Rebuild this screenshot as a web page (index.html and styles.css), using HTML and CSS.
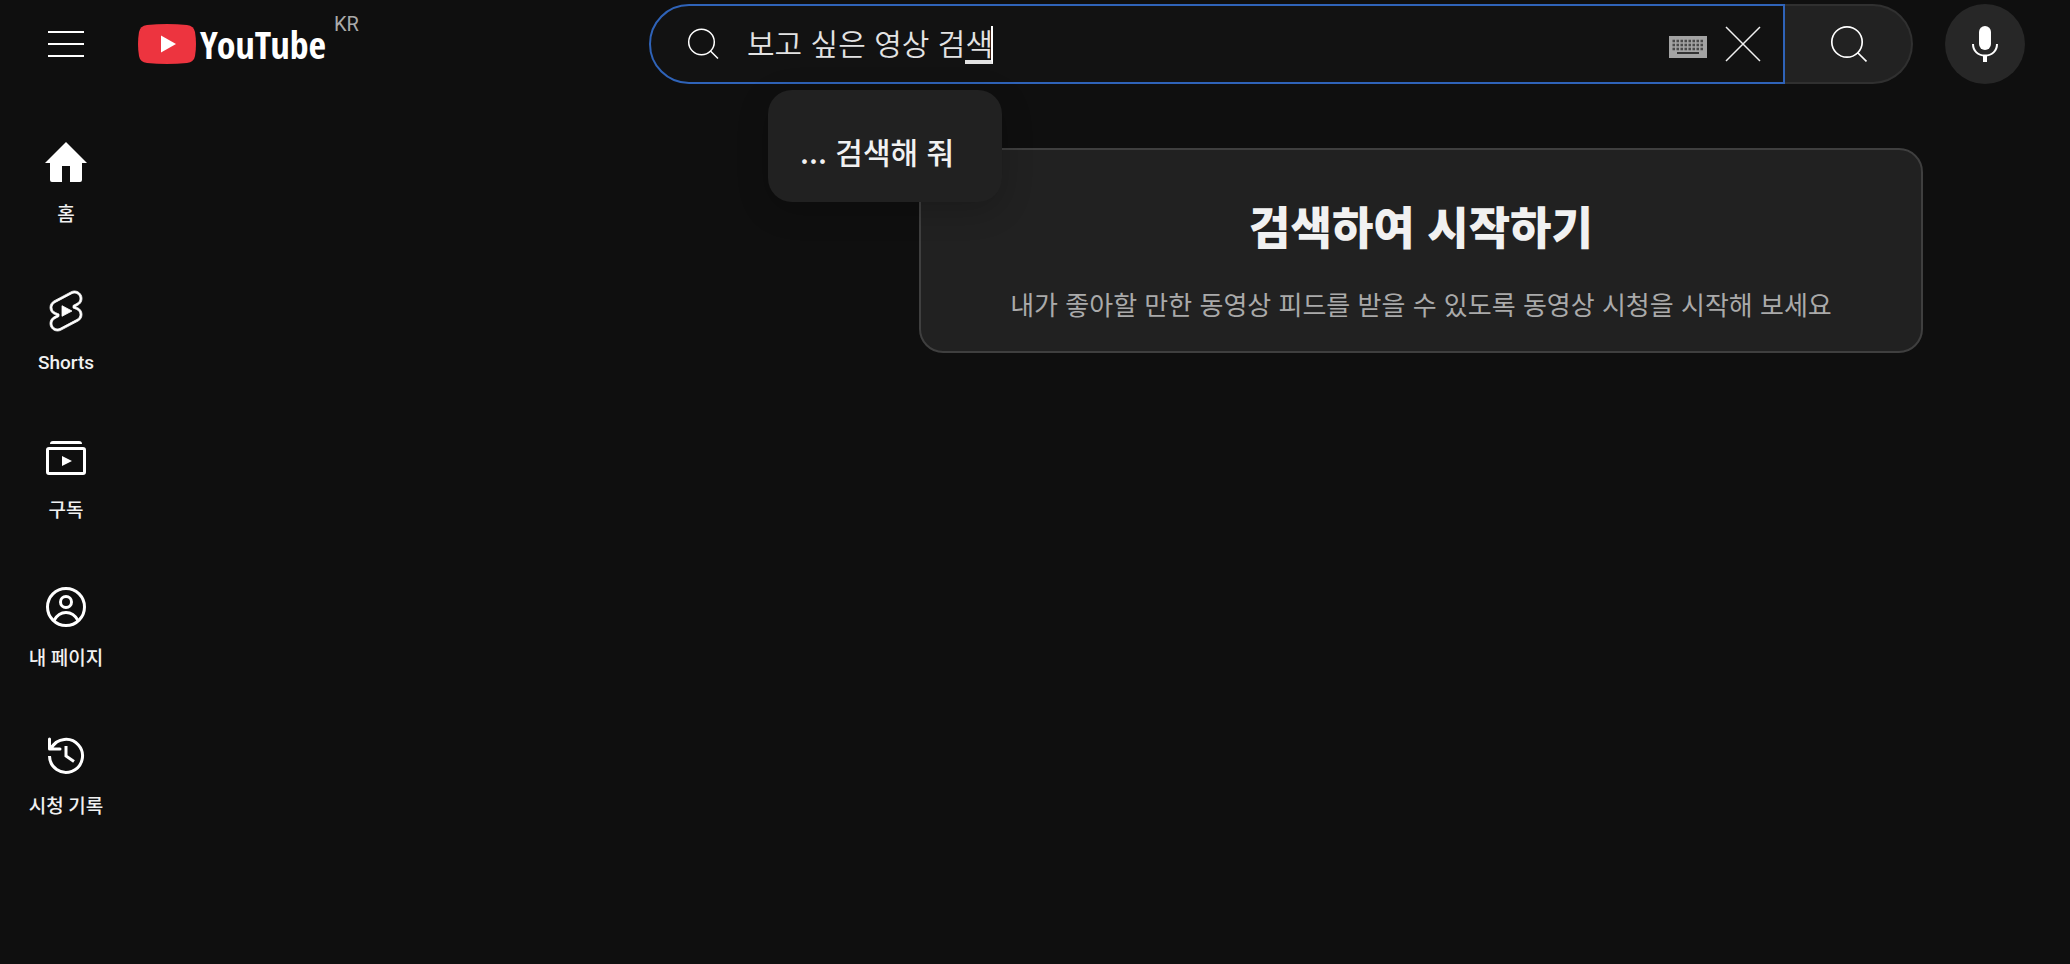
FILE: index.html
```html
<!DOCTYPE html>
<html lang="ko">
<head>
    <meta charset="utf-8">
    <title>YouTube</title>
    <link rel="stylesheet" href="styles.css">
</head>
<body>
    <header class="header">
        <div class="start">
            <button class="icon-button" type="button" aria-label="메뉴">
                <svg width="36" height="26" viewBox="0 0 36 26" fill="#fff">
                    <path d="M0 0h36v2H0zM0 12h36v2H0zM0 24h36v2H0z"/>
                </svg>
            </button>
            <a class="logo" href="/" aria-label="YouTube 홈">
                <svg width="58" height="40" viewBox="0 0 58 40">
                    <path fill="#ed343f" d="M9 1Q29-1 49 1Q56 2 57 8Q59 20 57 32Q56 38 49 39Q29 41 9 39Q2 38 1 32Q-1 20 1 8Q2 2 9 1z"/>
                    <path fill="#fff" d="M23 11.500v17L38 20z"/>
                </svg>
                <span class="wordmark">YouTube</span>
                <span class="country">KR</span>
            </a>
        </div>

        <form class="search" role="search">
            <div class="search-box">
                <svg width="32" height="32" viewBox="0 0 32 32" fill="none" stroke="#fff" stroke-width="1.500">
                    <circle cx="14.500" cy="14" r="12.800"/>
                    <path d="M23.500 23l7.500 7.500"/>
                </svg>
                <div class="field">
                    <input class="query" type="text" aria-label="검색" value="보고 싶은 영상 검색">
                    <span class="composing"></span>
                </div>
                <button class="icon-button keyboard" type="button" aria-label="키보드">
                    <svg width="38" height="22" viewBox="0 0 38 22">
                        <path fill="#a3a3a3" d="M0 0h38v22H0z"/>
                        <path stroke="#4a4a4a" stroke-width="2.500" stroke-dasharray="2.500 1.500" d="M3.500 5h31M3.500 9h31M3.500 13h31"/>
                        <path fill="#333" d="M8 16h22v2H8z"/>
                    </svg>
                </button>
                <button class="icon-button" type="button" aria-label="지우기">
                    <svg width="36" height="36" viewBox="0 0 36 36" stroke="#f1f1f1" stroke-width="1.500">
                        <path d="M1 1l34 34M35 1L1 35"/>
                    </svg>
                </button>
            </div>
            <button class="search-button" type="submit" aria-label="검색">
                <svg width="38" height="38" viewBox="0 0 38 38" fill="none" stroke="#fff" stroke-width="1.700">
                    <circle cx="18" cy="17" r="15.200"/>
                    <path d="M28.500 27.500l9 9"/>
                </svg>
            </button>
            <div class="suggestion">... 검색해 줘</div>
        </form>

        <button class="mic" type="button" aria-label="음성으로 검색">
            <svg width="28" height="36" viewBox="0 0 28 36">
                <rect fill="#fff" x="8" y="0" width="12" height="24" rx="6"/>
                <path fill="none" stroke="#fff" stroke-width="2" d="M2 18c0 7 5 11.500 12 11.500S26 25 26 18"/>
                <path fill="#fff" d="M12 29h4v7h-4z"/>
            </svg>
        </button>
    </header>

    <div class="page">
        <nav class="guide">
            <a class="guide-item" href="/">
                <svg width="48" height="48" viewBox="0 0 48 48" fill="#fff">
                    <path d="M24 3L3 24h5v17q0 2 2 2h10V27h8v16h10q2 0 2-2V24h5z"/>
                </svg>
                <span>홈</span>
            </a>
            <a class="guide-item" href="/shorts">
                <svg width="48" height="48" viewBox="0 0 24 24" fill="#fff" stroke="#fff" stroke-width=".4">
                    <path d="M10 14.650v-5.300L15 12l-5 2.650zm7.770-4.330-1.200-.5L18 9.060c1.840-.96 2.530-3.230 1.560-5.060s-3.240-2.530-5.070-1.560L6 6.940c-1.290.68-2.070 2.040-2 3.490.07 1.420.93 2.670 2.220 3.250.03.01 1.200.5 1.200.5L6 14.930c-1.830.97-2.530 3.240-1.560 5.070.97 1.830 3.240 2.530 5.070 1.560l8.500-4.500c1.290-.68 2.060-2.040 1.990-3.490-.07-1.420-.94-2.680-2.230-3.250zm-.23 5.860-8.500 4.500c-1.340.71-3.010.2-3.720-1.140-.71-1.340-.2-3.010 1.140-3.720l2.040-1.080v-1.210l-.69-.28-1.110-.46c-.99-.41-1.650-1.350-1.700-2.410-.05-1.060.52-2.060 1.460-2.560l8.500-4.500c1.340-.71 3.010-.2 3.720 1.140.71 1.340.2 3.010-1.140 3.720L15.500 9.260v1.210l1.800.74c.99.41 1.650 1.350 1.700 2.410.05 1.060-.52 2.060-1.460 2.560z"/>
                </svg>
                <span>Shorts</span>
            </a>
            <a class="guide-item" href="/subscriptions">
                <svg width="48" height="48" viewBox="0 0 48 48" fill="#fff">
                    <path d="M8 9q0-3 3-3h26q3 0 3 3z"/>
                    <rect x="5.500" y="13.500" width="37" height="25" rx="1.500" fill="none" stroke="#fff" stroke-width="3"/>
                    <path d="M20 21v10l10-5z"/>
                </svg>
                <span>구독</span>
            </a>
            <a class="guide-item" href="/you">
                <svg width="48" height="48" viewBox="0 0 48 48" fill="none" stroke="#fff" stroke-width="3">
                    <circle cx="24" cy="24" r="18.500"/>
                    <circle cx="24" cy="19" r="5.500"/>
                    <path d="M12 37.500C15 32 19 29.500 24 29.500S33 32 36 37.500"/>
                </svg>
                <span>내 페이지</span>
            </a>
            <a class="guide-item" href="/history">
                <svg width="48" height="48" viewBox="0 0 48 48" fill="none" stroke="#fff" stroke-width="3">
                    <path d="M7.500 25A16.500 16.500 0 1 0 9.500 17"/>
                    <path d="M7.500 8v10H18M8 17.500L14 11.500" stroke-linejoin="round" stroke-linecap="round"/>
                    <path d="M24 15v10l8 5.500"/>
                </svg>
                <span>시청 기록</span>
            </a>
        </nav>

        <main class="main">
            <section class="card">
                <h1>검색하여 시작하기</h1>
                <p>내가 좋아할 만한 동영상 피드를 받을 수 있도록 동영상 시청을 시작해 보세요</p>
            </section>
        </main>
    </div>
</body>
</html>
```

FILE: styles.css
```css
* {
    box-sizing: border-box;
}
body {
    margin: 0;
    background: #0f0f0f;
    color: #f1f1f1;
    font-family: Roboto, "Noto Sans CJK KR", sans-serif;
}
button {
    padding: 0;
    border: none;
    background: none;
    cursor: pointer;
}
a {
    color: inherit;
    text-decoration: none;
}
svg {
    display: block;
    flex-shrink: 0;
}
.header {
    display: grid;
    grid-template-columns: minmax(auto, 601px) 1fr auto;
    padding: 4px 45px 4px 48px;
}
.start {
    display: flex;
    align-items: center;
    gap: 54px;
}
.icon-button {
    display: flex;
    flex-shrink: 0;
}
.logo {
    display: flex;
    align-items: center;
    gap: 4px;
}
.wordmark {
    font-family: "Open Sans Condensed", "Roboto Condensed", "Liberation Sans Narrow", Roboto, sans-serif;
    font-size: 38px;
    font-weight: 700;
    line-height: 40px;
    color: #fff;
}
.country {
    align-self: flex-start;
    margin-left: 4px;
    font-size: 20px;
    line-height: 20px;
    margin-top: -10px;
    color: #aaa;
}
.search {
    display: flex;
    position: relative;
    margin-right: 32px;
}
.search-box {
    flex: 1;
    display: flex;
    align-items: center;
    height: 80px;
    padding: 0 22px 0 36px;
    border: 2px solid #2f63b8;
    border-radius: 40px 0 0 40px;
    background: #121212;
}
.field {
    position: relative;
    margin-left: 28px;
    margin-right: auto;
}
.query {
    display: block;
    field-sizing: content;
    height: 40px;
    padding: 0 0 4px;
    border: none;
    outline: none;
    background: none;
    color: #e3e3e3;
    font-family: "Noto Sans CJK KR", sans-serif;
    font-size: 30px;
    font-weight: 350;
}
/* underline and caret of the syllable being typed */
.composing {
    position: absolute;
    right: 0;
    bottom: 0;
    width: 28px;
    height: 38px;
    border-right: 2px solid #fff;
    border-bottom: 4px solid #e3e3e3;
}
.keyboard {
    margin-top: 6px;
    margin-right: 18px;
}
.search-button {
    display: flex;
    align-items: center;
    justify-content: center;
    width: 128px;
    height: 80px;
    border: 2px solid #303030;
    border-left: none;
    border-radius: 0 40px 40px 0;
    background: #222;
}
.suggestion {
    position: absolute;
    top: 86px;
    left: 119px;
    padding: 41px 48px 31px 32px;
    border-radius: 24px;
    background: #212121;
    box-shadow: 0 8px 32px rgba(0, 0, 0, 0.2);
    font-family: "Noto Sans CJK KR", sans-serif;
    font-size: 30px;
    font-weight: 500;
    line-height: 40px;
    white-space: nowrap;
}
.mic {
    display: flex;
    align-items: center;
    justify-content: center;
    width: 80px;
    height: 80px;
    border-radius: 50%;
    background: #272727;
}
.page {
    display: flex;
}
.guide {
    flex: 0 0 132px;
    padding-top: 21px;
}
.guide-item {
    display: flex;
    flex-direction: column;
    align-items: center;
    gap: 14px;
    padding: 30px 0 28px;
    font-size: 19px;
    font-weight: 500;
    line-height: 28px;
}
.main {
    flex: 1;
    padding: 60px 147px 0 0;
}
.card {
    max-width: 1004px;
    margin-left: auto;
    padding: 46px 32px 29px;
    border: 2px solid #3f3f3f;
    border-radius: 24px;
    background: #212121;
    font-family: "Noto Sans CJK KR", sans-serif;
    text-align: center;
}
.card h1 {
    margin: 0 0 30px;
    font-size: 45px;
    font-weight: 900;
    line-height: 60px;
}
.card p {
    margin: 0;
    font-size: 26px;
    line-height: 36px;
    color: #aaa;
}
```
